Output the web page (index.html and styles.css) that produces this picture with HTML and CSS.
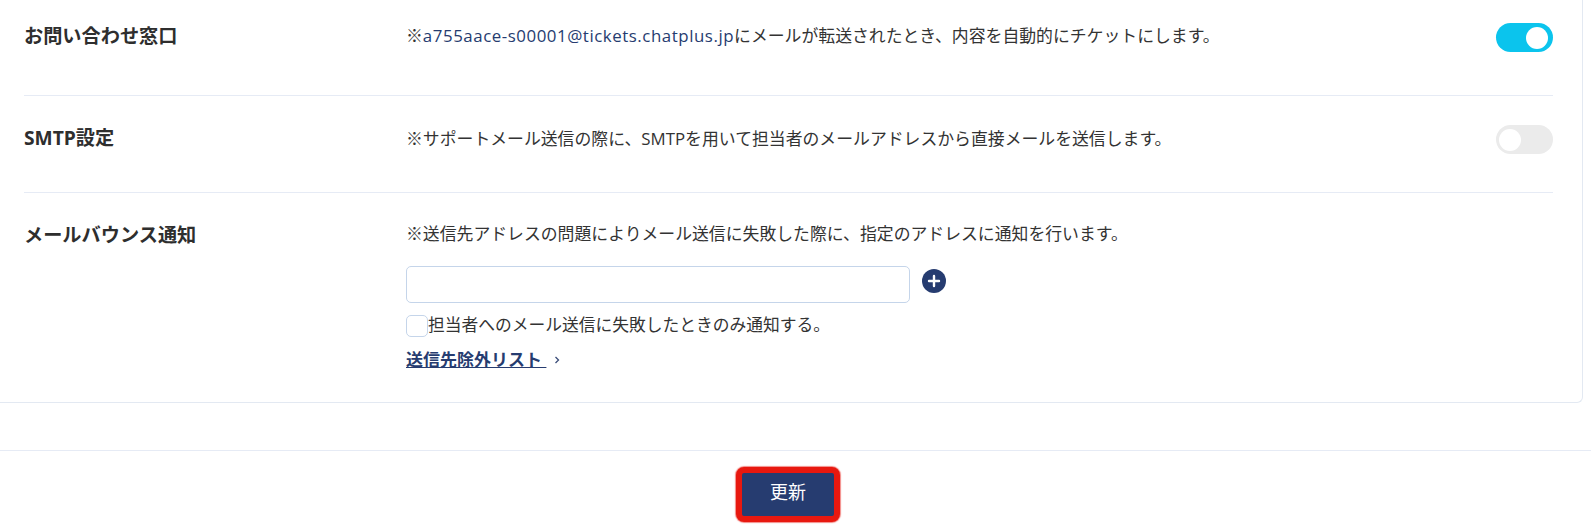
FILE: index.html
```html
<!DOCTYPE html>
<html lang="ja">
<head>
<meta charset="utf-8">
<title>設定</title>
<link rel="stylesheet" href="styles.css">
</head>
<body>
<main class="card">
  <section class="row row-first">
    <h2 class="label">お問い合わせ窓口</h2>
    <p class="desc">※<a class="mail">a755aace-s00001@tickets.chatplus.jp</a>にメールが転送されたとき、内容を自動的にチケットにします。</p>
    <span class="toggle on"><span class="knob"></span></span>
  </section>
  <section class="row row-second">
    <h2 class="label">SMTP設定</h2>
    <p class="desc">※サポートメール送信の際に、SMTPを用いて担当者のメールアドレスから直接メールを送信します。</p>
    <span class="toggle"><span class="knob"></span></span>
  </section>
  <section class="row row-last">
    <h2 class="label">メールバウンス通知</h2>
    <div class="body">
      <p class="desc">※送信先アドレスの問題によりメール送信に失敗した際に、指定のアドレスに通知を行います。</p>
      <div class="field">
        <input class="input" type="text">
        <svg class="plus" viewBox="0 0 24 24" width="24" height="24"><circle cx="12" cy="12" r="12" fill="#263c70"/><path d="M12 7v10M7 12h10" stroke="#fff" stroke-width="2.4" stroke-linecap="round"/></svg>
      </div>
      <label class="check"><span class="box"></span><span>担当者へのメール送信に失敗したときのみ通知する。</span></label>
      <div class="linkrow"><a class="link">送信先除外リスト </a><svg class="chev" viewBox="0 0 6 8" width="6" height="8"><path d="M1.5 1l3 3-3 3" fill="none" stroke="#3a4c78" stroke-width="1.3"/></svg></div>
    </div>
  </section>
</main>
<footer class="footer">
  <button class="update" type="button">更新</button>
</footer>
</body>
</html>
```
FILE: styles.css
```css
* { box-sizing: border-box; }
html, body { margin: 0; padding: 0; height: 100%; background: #fff; overflow: hidden; }
body {
  width: 1591px;
  height: 529px;
  font-family: "Open Sans", "Noto Sans CJK JP", sans-serif;
  color: #333;
}
.card {
  width: 1583px;
  height: 403px;
  padding: 0 29px 0 24px;
  border-right: 1px solid #e3e9f2;
  border-bottom: 1px solid #e3e9f2;
  border-bottom-right-radius: 6px;
}
.row {
  display: flex;
  align-items: flex-start;
  border-bottom: 1px solid #e6ebf5;
}
.row-first { height: 96px; padding-top: 23px; }
.row-second { height: 97px; padding-top: 29px; }
.row-last { border-bottom: 0; padding-top: 28px; }
.label {
  flex: 0 0 382px;
  margin: 0;
  font-size: 19.2px;
  line-height: 26px;
  font-weight: 700;
  color: #2e2e2e;
}
.row-second .desc { margin-top: 1px; }
.row-last .label { margin-top: 1px; }
.desc {
  flex: 1;
  margin: 0;
  font-size: 16.85px;
  line-height: 26px;
  font-weight: 400;
  color: #333;
}
.mail { color: #263c70; letter-spacing: 0.55px; }
.toggle {
  flex: none;
  display: flex;
  align-items: center;
  width: 57px;
  height: 29px;
  padding: 0 3px;
  border-radius: 15px;
  background: #ebebeb;
}
.toggle.on { justify-content: flex-end; background: #0bc4ed; padding: 0 5px; }
.knob { width: 22px; height: 22px; border-radius: 50%; background: #fff; }
.body { flex: 1; }
.field {
  display: flex;
  align-items: flex-start;
  gap: 12px;
  margin-top: 19px;
}
.input {
  width: 504px;
  height: 37px;
  padding: 0 10px;
  border: 1px solid #c5d5ea;
  border-radius: 5px;
  background: #fff;
}
.plus { margin-top: 3px; }
.check {
  display: flex;
  align-items: flex-start;
  margin-top: 10px;
  font-size: 16.75px;
  line-height: 24px;
  color: #333;
}
.box {
  flex: none;
  width: 22px;
  height: 22px;
  margin-top: 2px;
  border: 1px solid #c5d5ea;
  border-radius: 5px;
  background: #fff;
}
.linkrow {
  display: flex;
  align-items: center;
  gap: 8px;
  margin-top: 11px;
}
.link {
  font-size: 17px;
  line-height: 24px;
  font-weight: 700;
  color: #263c70;
  text-decoration: underline;
  white-space: pre;
}
.footer {
  margin-top: 47px;
  border-top: 1px solid #e6ebf5;
  display: flex;
  justify-content: center;
  padding-top: 16px;
  padding-right: 15px;
}
.update {
  width: 104px;
  height: 55px;
  background: #263c70;
  border: 6px solid #e8180f;
  border-radius: 8px;
  box-shadow: 0 0 1px 1px rgba(232, 24, 15, 0.5);
  color: #fff;
  font-family: inherit;
  font-size: 18px;
  padding: 0 0 7px;
}
```
